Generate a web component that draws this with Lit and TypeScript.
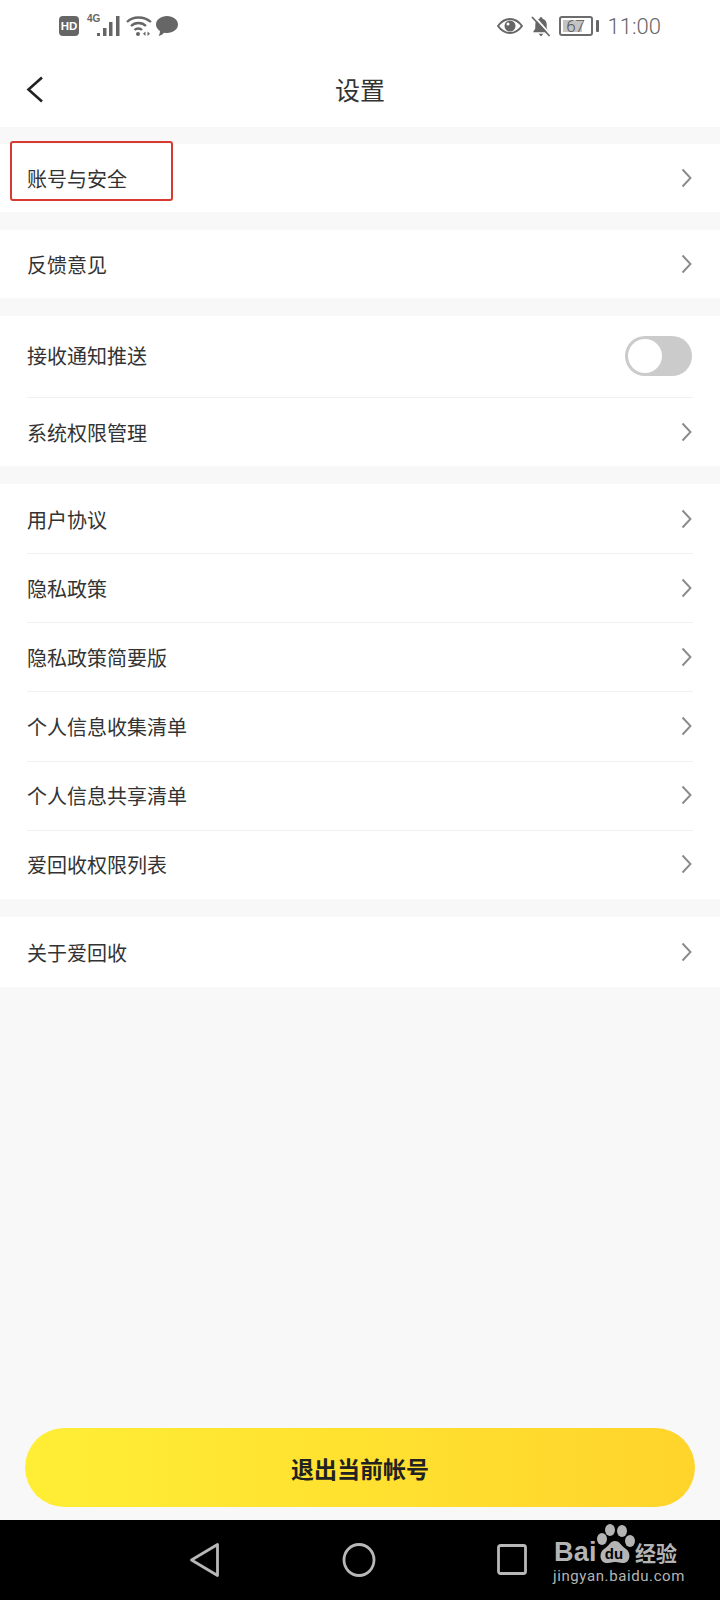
import { LitElement, html, css } from "lit";
import { customElement } from "lit/decorators.js";

const chevron = html`<svg class="chev" width="14" height="20" viewBox="0 0 14 20"><path d="M2.5 1.500 L10.500 10 L2.500 18.500" fill="none" stroke="#8a8a8a" stroke-width="1.900"/></svg>`;

@customElement("app-root")
export class AppRoot extends LitElement {
  static styles = css`
    :host { display: block; width: 720px; height: 1600px; position: relative; overflow: hidden;
      background: #f8f8f8; font-family: "Noto Sans CJK SC", "Liberation Sans", sans-serif; color: #333; }
    .page { display: flex; flex-direction: column; height: 1600px; }
    .status { height: 50px; background: #fff; display: flex; align-items: center; justify-content: space-between;
      padding: 2px 59px 0 59px; box-sizing: border-box; color: #666; }
    .status-group { display: flex; align-items: center; }
    .hd { width: 20px; height: 20px; border-radius: 4px; background: #666; color: #fff; font: 700 11.500px "Liberation Sans", sans-serif;
      display: flex; align-items: center; justify-content: center; margin-right: 8px; }
    .g4 { font: 700 10px/10px "Liberation Sans", sans-serif; color: #666; width: 10px; margin-bottom: 14px; white-space: nowrap; }
    .sig { margin-right: 6px; }
    .wifi { margin-right: 4px; }
    .eye { margin-right: 8px; }
    .bell { margin-right: 8px; }
    .batt { width: 34px; height: 20px; border: 2px solid #6c6c6c; border-radius: 3px; box-sizing: border-box; padding: 2px; position: relative; }
    .batt-fill { width: 74%; height: 100%; background: #c4c4c4; }
    .batt-n { position: absolute; inset: 0; display: flex; align-items: center; justify-content: center; font: 300 17px "Roboto", sans-serif; color: #555; }
    .batt-tip { width: 3px; height: 12px; background: #666; border-radius: 1px; margin: 0 9px 0 3px; }
    .time { font: 300 22px "Roboto", "Liberation Sans", sans-serif; color: #666; }
    .nav { height: 77px; background: #fff; display: flex; align-items: center; justify-content: center; position: relative; box-sizing: border-box; }
    .nav .back { position: absolute; left: 25px; top: 26px; }
    .title { font-size: 25px; color: #333; line-height: 32px; }
    .group { background: #fff; margin-top: 18px; }
    .group.first { margin-top: 17px; }
    .row { height: 68px; padding: 0 27px; display: flex; align-items: center; justify-content: space-between; position: relative; font-size: 20px; line-height: 28px; }
    .row span { margin-top: 2px; }
    .row.tall { height: 81px; padding-bottom: 1px; box-sizing: border-box; }
    .row.tall span { margin-top: 0; }
    .row.sys { height: 69px; }
    .row.end { height: 70px; }
    .row.list { height: 69.170px; }
    .row + .row::before { content: ""; position: absolute; left: 27px; right: 27px; top: 0; height: 1px; background: #f0f0f0; }
    .row .chev { margin-right: -2px; position: relative; left: -1px; }
    .sw { width: 67px; height: 40px; border-radius: 20px; background: #cbcbcb; position: relative; margin-right: 1px; }
    .sw::after { content: ""; position: absolute; left: 3px; top: 3px; width: 34px; height: 34px; border-radius: 50%; background: #fff; }
    .spacer { flex: 1; }
    .logout { margin: 0 25px 13px; height: 79px; border-radius: 40px; background: linear-gradient(90deg, #ffee35, #ffd42b);
      display: flex; align-items: center; justify-content: center; font-size: 23px; font-weight: 700; color: #222; }
    .sysbar { height: 80px; background: #000; display: flex; align-items: center; padding: 0 0 0 188px; box-sizing: border-box; }
    .sysbar .b1 { margin-right: 122px; }
    .sysbar .b2 { margin-right: 121px; }
    .mark { position: absolute; left: 553px; top: 1490px; width: 160px; height: 106px; color: #b4b4b4; }
    .bai { position: absolute; left: 1px; top: 47px; font: 700 27px/30px "Liberation Sans", sans-serif; letter-spacing: .3px; }
    .jy { position: absolute; left: 82px; top: 47px; font: 700 21px/30px "Noto Sans CJK SC", sans-serif; }
    .url { position: absolute; left: 0; top: 77px; font: 400 15px/18px "Roboto", sans-serif; letter-spacing: .6px; white-space: nowrap; }
    .paw { position: absolute; left: 40px; top: 34px; }
    .du { font: 700 15px "Liberation Sans", sans-serif; fill: #000; }
    .highlight { position: absolute; left: 10px; top: 141px; width: 163px; height: 60px; border: 2px solid #d83a32; border-radius: 3px; box-sizing: border-box; }
  `;

  private row(label: string, cls = "") {
    return html`<div class="row ${cls}"><span>${label}</span>${chevron}</div>`;
  }

  render() {
    return html`
      <div class="page">
        <div class="status">
          <div class="status-group">
            <span class="hd">HD</span>
            <span class="g4">4G</span>
            <svg class="sig" width="23" height="20" viewBox="0 0 23 20" fill="#666">
              <rect x="0" y="17" width="3" height="3"/><rect x="6" y="12" width="3.500" height="8"/><rect x="12" y="6" width="3.500" height="14"/><rect x="19" y="0" width="3.500" height="20"/>
            </svg>
            <svg class="wifi" width="26" height="20" viewBox="0 0 26 20" fill="none" stroke="#666" stroke-width="2.300">
              <path d="M1 6 C7 0 18 0 25 6"/><path d="M5 10 C9 6 16 6 20 10"/><path d="M8.500 14 C10.500 12 14 12 16 14"/>
              <circle cx="12" cy="18" r="2" fill="#666" stroke="none"/>
              <path d="M19.500 15.500 l-2.500 2.200 l2.500 2.200 z M21.500 15.500 l2.500 2.200 l-2.500 2.200 z" fill="#666" stroke="none"/>
            </svg>
            <svg width="22" height="20" viewBox="0 0 22 20" fill="#666"><path d="M11 0 C17 0 22 3.600 22 8.500 C22 13.400 17 17 11 17 C10 17 9 16.900 8 16.700 C6.500 18.500 4.500 19.500 2.500 20 C3.500 18.500 4 16.800 4 15 C1.500 13.400 0 11.100 0 8.500 C0 3.600 5 0 11 0 Z"/></svg>
          </div>
          <div class="status-group">
            <svg class="eye" width="26" height="16" viewBox="0 0 26 16"><path d="M1 8 C5 2.500 9 1 13 1 C17 1 21 2.500 25 8 C21 13.500 17 15 13 15 C9 15 5 13.500 1 8 Z" fill="none" stroke="#666" stroke-width="2"/><circle cx="13" cy="8" r="5.500" fill="#666"/><circle cx="11" cy="6" r="1.500" fill="#fff"/></svg>
            <svg class="bell" width="20" height="21" viewBox="0 0 21 22" fill="#666"><path d="M10.500 1 C11.500 1 12 1.800 12 2.800 C15 3.500 16.500 6 16.500 9 L16.500 13 L19 17 L2 17 L4.500 13 L4.500 9 C4.500 6 6 3.500 9 2.800 C9 1.800 9.500 1 10.500 1 Z"/><path d="M8 18.500 L13 18.500 L10.500 21.500 Z"/><path d="M3 0 L21 20" stroke="#fff" stroke-width="2"/><path d="M1 1 L19.500 21" stroke="#666" stroke-width="1.800"/></svg>
            <div class="batt"><div class="batt-fill"></div><div class="batt-n">67</div></div>
            <div class="batt-tip"></div>
            <span class="time">11:00</span>
          </div>
        </div>
        <div class="nav">
          <svg class="back" width="20" height="28" viewBox="0 0 20 28"><path d="M17 1.500 L3.500 13.500 L17 25.500" fill="none" stroke="#222" stroke-width="2.600"/></svg>
          <span class="title">设置</span>
        </div>
        <div class="group first">${this.row("账号与安全")}</div>
        <div class="group">${this.row("反馈意见")}</div>
        <div class="group">
          <div class="row tall"><span>接收通知推送</span><div class="sw"></div></div>
          ${this.row("系统权限管理", "sys")}
        </div>
        <div class="group">
          ${["用户协议", "隐私政策", "隐私政策简要版", "个人信息收集清单", "个人信息共享清单", "爱回收权限列表"].map((t) => this.row(t, "list"))}
        </div>
        <div class="group">${this.row("关于爱回收", "end")}</div>
        <div class="spacer"></div>
        <div class="logout">退出当前帐号</div>
        <div class="sysbar">
          <svg class="b1" width="32" height="36" viewBox="0 0 32 36"><path d="M29.500 2.500 L29.500 33.500 L3.500 18 Z" fill="none" stroke="#b8b8b8" stroke-width="2.800" stroke-linejoin="round"/></svg>
          <svg class="b2" width="34" height="36" viewBox="0 0 34 36"><ellipse cx="17" cy="18" rx="15" ry="15.500" fill="none" stroke="#b8b8b8" stroke-width="2.800"/></svg>
          <svg width="30" height="32" viewBox="0 0 30 32"><rect x="1.500" y="1.500" width="27" height="28" rx="2" fill="none" stroke="#b8b8b8" stroke-width="2.800"/></svg>
        </div>
      </div>
      <div class="highlight"></div>
      <div class="mark">
        <span class="bai">Bai</span>
        <svg class="paw" width="44" height="44" viewBox="0 0 44 44" fill="#b4b4b4">
          <ellipse cx="17" cy="6" rx="5" ry="6"/><ellipse cx="29" cy="7" rx="5" ry="6"/>
          <ellipse cx="9" cy="15" rx="5" ry="6"/><ellipse cx="37" cy="17" rx="5" ry="6"/>
          <path d="M22 17 C27 17 28 22 33 25 C38 28 38 39 30 39 C26 39 25 38 22 38 C19 38 18 39 14 39 C6 39 6 28 11 25 C16 22 17 17 22 17 Z"/>
          <text class="du" x="21" y="35" text-anchor="middle">du</text>
        </svg>
        <span class="jy">经验</span>
        <span class="url">jingyan.baidu.com</span>
      </div>
    `;
  }
}
